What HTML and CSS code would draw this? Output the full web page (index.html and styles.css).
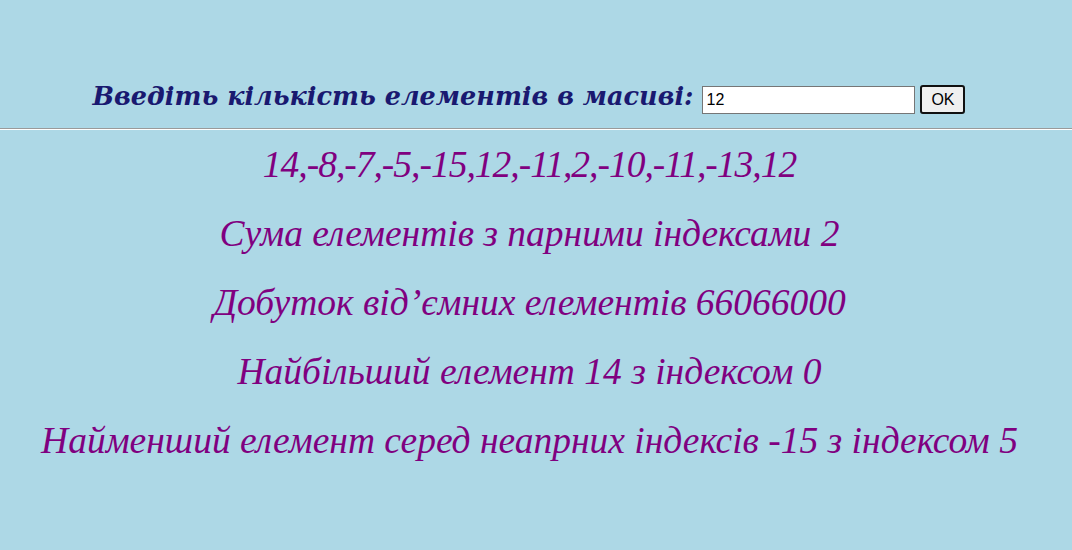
FILE: index.html
```html
<!DOCTYPE html>
<html lang="uk">
<head>
<meta charset="utf-8">
<link rel="stylesheet" href="styles.css">
</head>
<body>
<div class="form-row">
  <label class="prompt" for="n">Введіть кількість елементів в масиві:</label>
  <input class="num" id="n" type="text" value="12">
  <button class="ok" type="button">OK</button>
</div>
<hr class="sep">
<div class="results">
  <p class="line digits">14,-8,-7,-5,-15,12,-11,2,-10,-11,-13,12</p>
  <p class="line">Сума елементів з парними індексами 2</p>
  <p class="line">Добуток від’ємних елементів 66066000</p>
  <p class="line">Найбільший елемент 14 з індексом 0</p>
  <p class="line">Найменший елемент серед неапрних індексів -15 з індексом 5</p>
</div>
</body>
</html>
```
FILE: styles.css
```css
html, body {
  margin: 0;
  padding: 0;
  background: #add8e6;
}
body {
  font-family: "Liberation Serif", "DejaVu Serif", serif;
}
.form-row {
  display: flex;
  align-items: center;
  justify-content: center;
  padding: 85px 14px 14px 0;
  gap: 5px;
}
.prompt {
  box-sizing: border-box;
  font-family: "DejaVu Serif", "Liberation Serif", serif;
  font-weight: bold;
  font-style: italic;
  font-size: 25.5px;
  line-height: 23px;
  padding-bottom: 6px;
  color: #191970;
  margin-right: 4px;
}
.num {
  box-sizing: border-box;
  width: 213px;
  height: 28px;
  border: 1px solid #767676;
  background: #fff;
  font-family: "Liberation Sans", Arial, sans-serif;
  font-size: 16px;
  padding: 1px 3px;
  margin: 0;
}
.ok {
  box-sizing: border-box;
  width: 45px;
  height: 29px;
  border: 2px solid #111;
  border-radius: 3px;
  background: #efefef;
  font-family: "Liberation Sans", Arial, sans-serif;
  font-size: 16px;
  padding: 0;
  margin: 0;
}
.sep {
  margin: 0;
  border: none;
  border-top: 1px solid #9a9a9a;
  border-bottom: 1px solid #fff;
  height: 0;
}
.results {
  display: flex;
  flex-direction: column;
  align-items: center;
  padding: 13px 13px 0 0;
  gap: 25px;
}
.line {
  margin: 0;
  font-style: italic;
  font-size: 37.5px;
  line-height: 44px;
  color: #800080;
}
.digits {
  letter-spacing: -1px;
}
```
